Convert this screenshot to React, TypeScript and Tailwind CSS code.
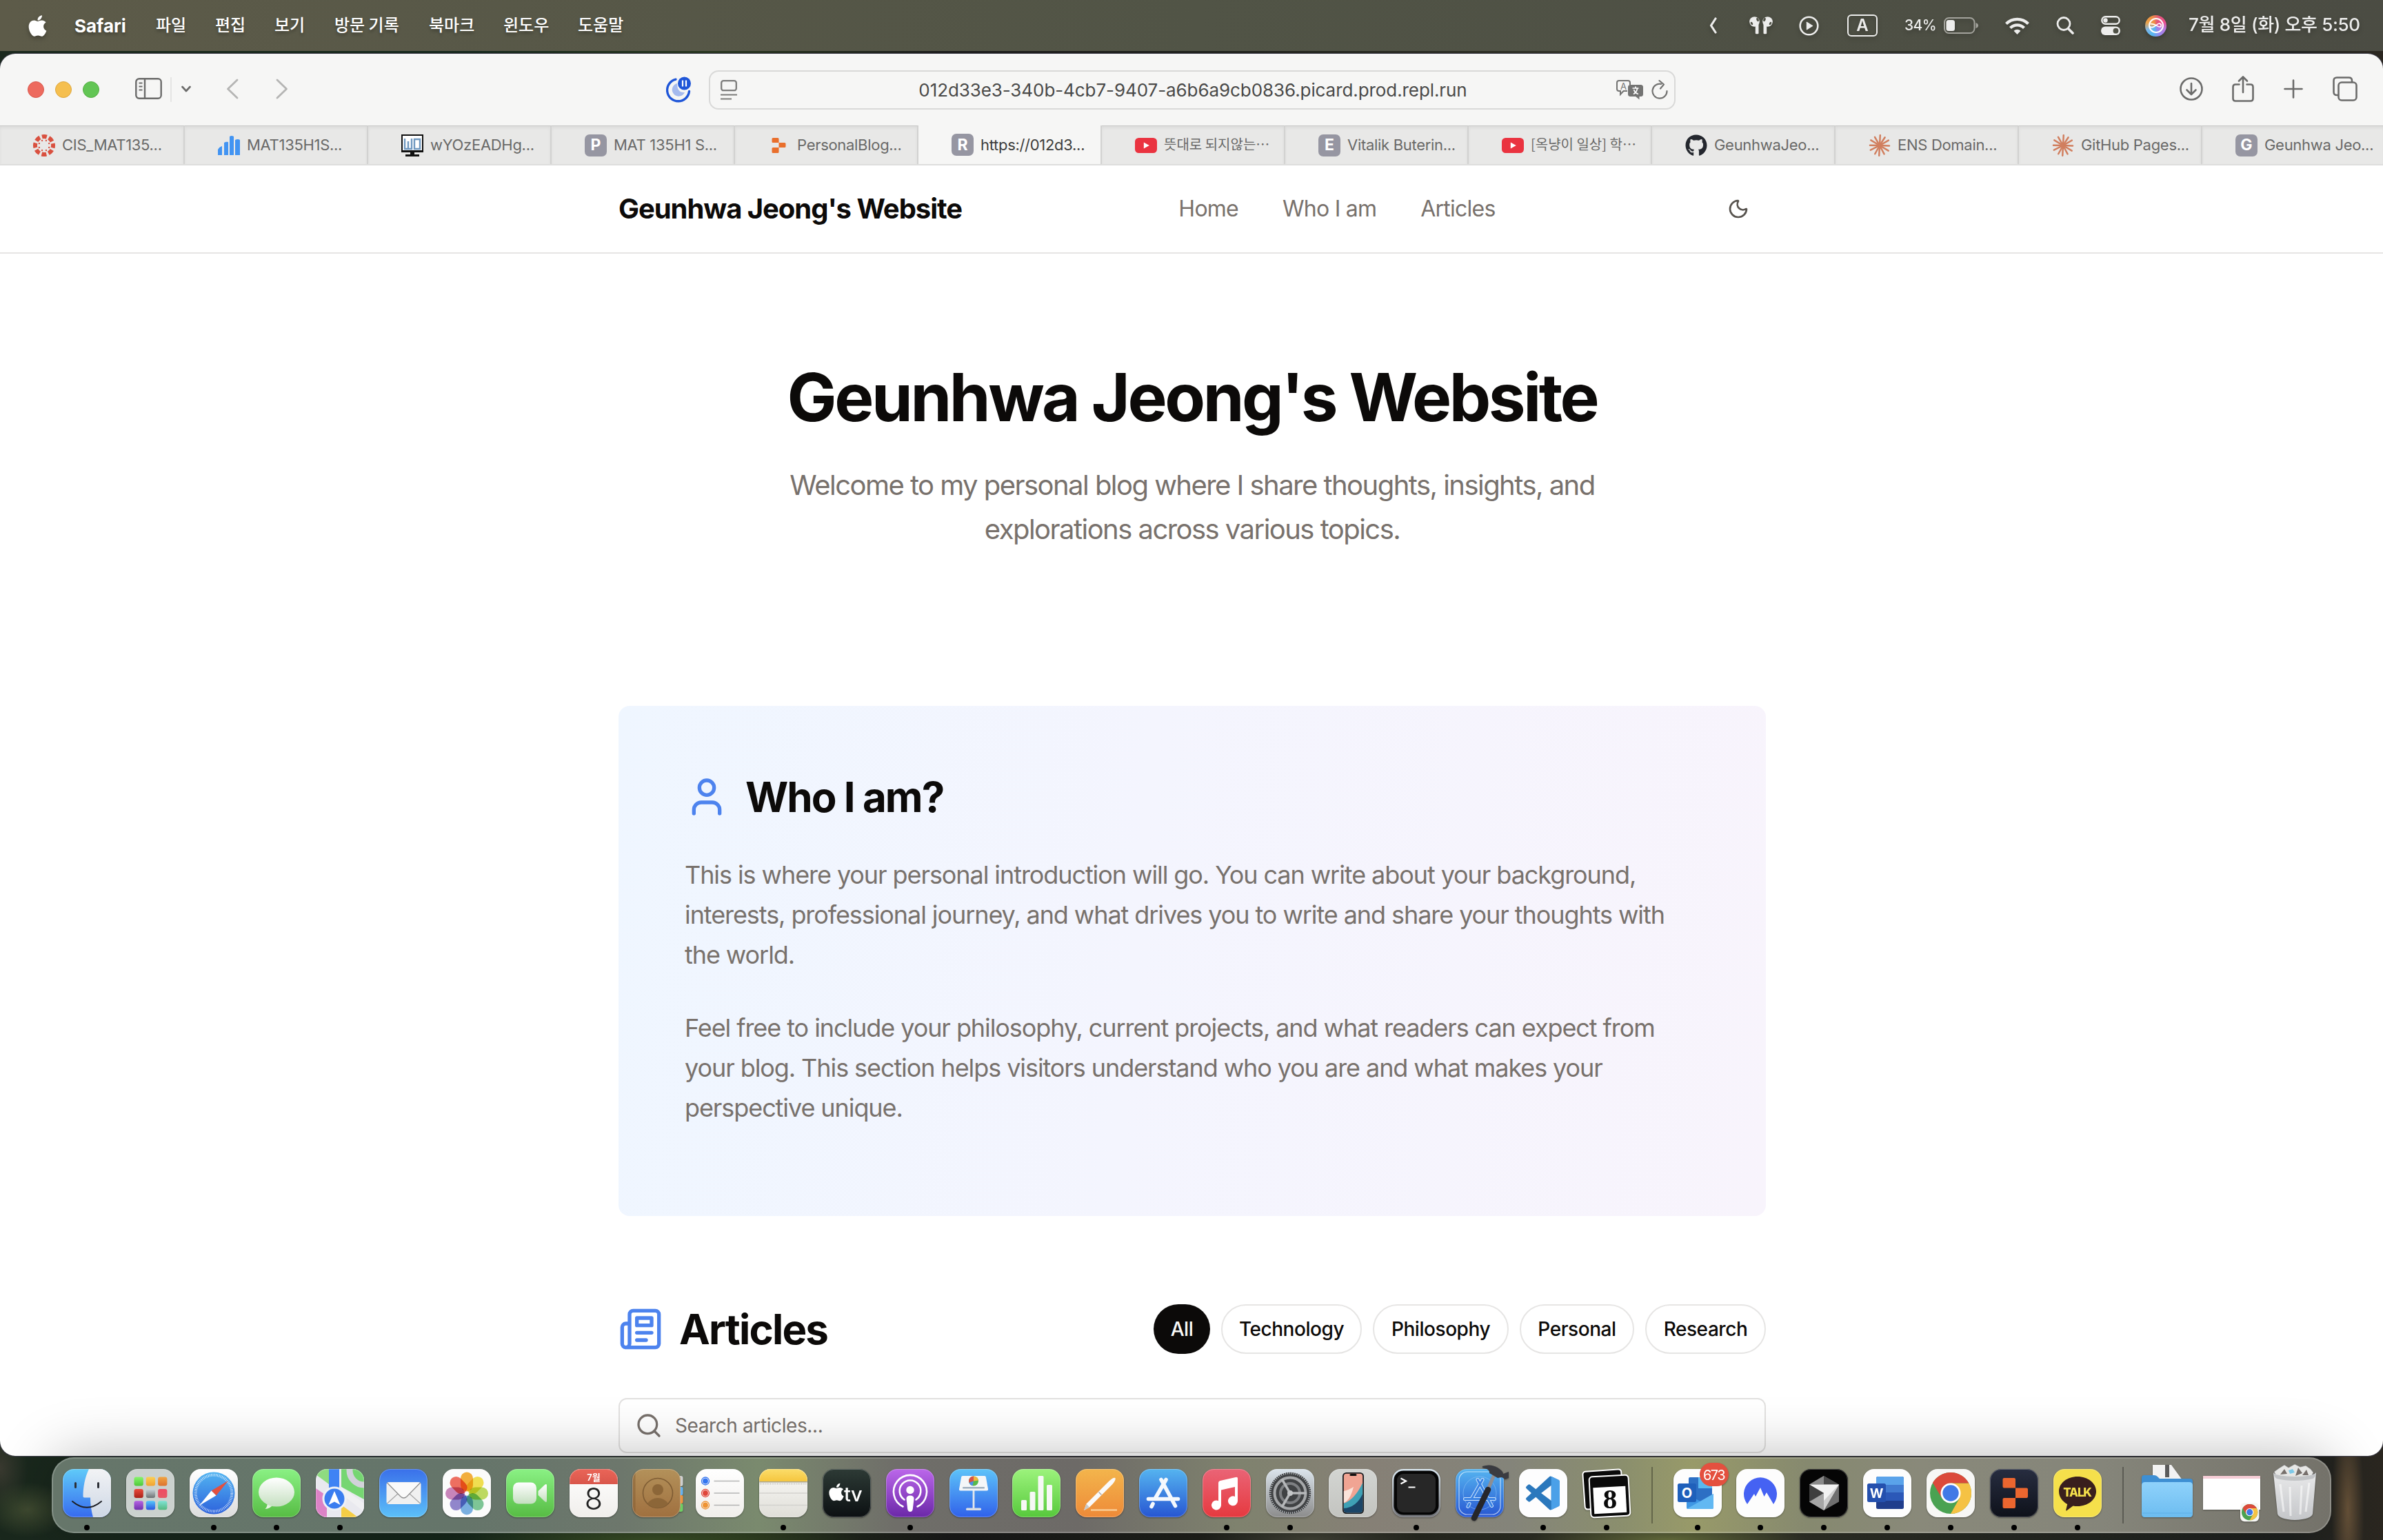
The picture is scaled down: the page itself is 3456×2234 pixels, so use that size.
import React from "react";
import { Search, User, Moon } from "lucide-react";
import { FaApple, FaGithub } from "react-icons/fa";

/* ---------- shared gradients ---------- */

const gradients: [string, string, string][] = [
  ["finderL", "#5fcaf9", "#376bee"],
  ["finderR", "#f2f3f5", "#cdd7e5"],
  ["white", "#ffffff", "#dcdcdc"],
  ["safari", "#52b4f1", "#2d62dc"],
  ["green", "#8af184", "#57bc44"],
  ["mail", "#3a70ea", "#5cc0f8"],
  ["calRed", "#ea6558", "#d9564b"],
  ["calBody", "#ffffff", "#f0eeeb"],
  ["contacts", "#b3915a", "#a0703f"],
  ["notesTop", "#fbdd6a", "#f5c63f"],
  ["notes", "#fbfaf7", "#dfded8"],
  ["tv", "#2d3a35", "#0c1012"],
  ["podcast", "#bb67ea", "#6b28a8"],
  ["keynote", "#5dc3f9", "#3061ea"],
  ["numbers", "#9cf37c", "#57c93c"],
  ["pages", "#f3b54c", "#ee8a38"],
  ["appstore", "#55b4f0", "#2756d2"],
  ["music", "#ea6476", "#e6393f"],
  ["settings", "#dbe4ec", "#8c8c8c"],
  ["phone", "#d3d5d2", "#c3c4c0"],
  ["terminal", "#d5e4ee", "#6e6f74"],
  ["replit", "#272d40", "#0e111a"],
  ["bubble", "#ffffff", "#c5dfc0"],
  ["folder", "#8fd2fb", "#6cbcf0"],
  ["trash", "#e9e9ea", "#c4c6c9"],
  ["lime", "#86f56a", "#4fc83c"],
  ["amber", "#fbcf52", "#f1a233"],
  ["orange", "#f1a441", "#dd7330"],
  ["red", "#ec4a3c", "#a82219"],
  ["gray", "#ccd6dc", "#6d7173"],
  ["pink", "#f04a62", "#e55a66"],
  ["purple", "#b562e2", "#7030ad"],
  ["cyan", "#54c6fb", "#2a55e0"],
  ["teal", "#7fe3d4", "#55b77f"],
];

function Gradients() {
  return (
    <svg className="absolute size-0">
      <defs>
        {gradients.map(([id, a, b]) => (
          <linearGradient key={id} id={id} x1="0" y1="0" x2="0" y2="1">
            <stop offset="0" stopColor={a} />
            <stop offset="1" stopColor={b} />
          </linearGradient>
        ))}
        <clipPath id="tile">
          <rect width="70" height="70" rx="16" />
        </clipPath>
      </defs>
    </svg>
  );
}

/* ---------- menu bar ---------- */

const menus = [
  { label: "파일", width: "w-[86px]" },
  { label: "편집", width: "w-[86px]" },
  { label: "보기", width: "w-[87px]" },
  { label: "방문 기록", width: "w-[137px]" },
  { label: "북마크", width: "w-[108px]" },
  { label: "윈도우", width: "w-[108px]" },
  { label: "도움말", width: "w-[108px]" },
];

function MenuBar() {
  return (
    <div className="flex h-[74px] shrink-0 items-center bg-linear-to-r from-[#5d5b49] via-[#515446] to-[#4b4c43] pr-[33px] pl-[41px] text-white">
      <FaApple className="h-[35px] w-[27px] drop-shadow-[0_3px_3px_rgba(0,0,0,0.3)]" />
      <span className="ml-10 w-[118px] text-[26px] font-bold [text-shadow:0_3px_4px_rgba(0,0,0,0.3)]">Safari</span>
      {menus.map((m) => (
        <span key={m.label} className={`${m.width} mb-1 font-['Noto_Sans_CJK_KR',sans-serif] text-[24px] font-medium whitespace-nowrap [text-shadow:0_3px_4px_rgba(0,0,0,0.3)]`}>
          {m.label}
        </span>
      ))}
      <div className="ml-auto flex items-center text-[#ededec] drop-shadow-[0_3px_3px_rgba(0,0,0,0.25)]">
        <svg className="h-[24px] w-[11px]" viewBox="0 0 11 24" fill="none" stroke="currentColor" strokeWidth="3.2" strokeLinecap="round" strokeLinejoin="round">
          <path d="M9 2 2.5 12 9 22" />
        </svg>
        <svg className="ml-[47px] h-[26px] w-[34px]" viewBox="0 0 34 26">
          <g fill="currentColor">
            <ellipse cx="7.5" cy="7.500" rx="7.300" ry="7.300" />
            <ellipse cx="26.500" cy="7.500" rx="7.300" ry="7.300" />
            <path d="M8.800 13 13.500 11V24q0 1.200-1.200 1.200H10q-1.200 0-1.200-1.200zM25.200 13 20.500 11V24q0 1.200 1.200 1.200H24q1.200 0 1.200-1.200z" />
          </g>
          <g fill="#4f5145">
            <ellipse cx="12" cy="4.500" rx="1.600" ry="2.800" transform="rotate(-25 12 4.500)" />
            <ellipse cx="22" cy="4.500" rx="1.600" ry="2.800" transform="rotate(25 22 4.500)" />
            <ellipse cx="3.500" cy="10" rx="1.500" ry="2.300" transform="rotate(-35 3.500 10)" />
            <ellipse cx="30.500" cy="10" rx="1.500" ry="2.300" transform="rotate(35 30.500 10)" />
          </g>
        </svg>
        <svg className="ml-[38px] size-[29px]" viewBox="0 0 29 29">
          <circle cx="14.500" cy="14.500" r="12.800" fill="none" stroke="currentColor" strokeWidth="2.600" />
          <path d="M10.800 9.200v10.600q0 .9.900.4l8.200-5.100q.8-.6 0-1.200l-8.200-5.100q-.9-.4-.9.400z" fill="currentColor" />
        </svg>
        <span className="ml-[41px] flex h-[32px] w-[44px] items-center justify-center rounded-[6px] border-2 border-current text-[24px] leading-none font-semibold">A</span>
        <span className="ml-[39px] w-[57px] text-[21px] font-medium tracking-[-0.6px]">34%</span>
        <svg className="h-[24px] w-[50px]" viewBox="0 0 50 24">
          <rect x="1" y="1" width="43.500" height="22" rx="6.500" fill="none" stroke="#a3a39c" strokeWidth="2" />
          <rect x="3.500" y="4" width="12.500" height="16" rx="3.500" fill="currentColor" />
          <path d="M46.500 8q3.500 1.200 3.500 4t-3.500 4z" fill="#a3a39c" />
        </svg>
        <svg className="ml-[39px] h-[25px] w-[35px]" viewBox="0 0 35 25" fill="none" stroke="currentColor" strokeWidth="4.200">
          <path d="M1.500 9.500a22.500 22.500 0 0 1 32 0" />
          <path d="M7.500 15.500a14 14 0 0 1 20 0" />
          <path d="M17.500 25l-5-5.200a7.200 7.200 0 0 1 10 0z" fill="currentColor" stroke="none" />
        </svg>
        <svg className="ml-[39px] h-[26px] w-[26px]" viewBox="0 0 26 26" fill="none" stroke="currentColor" strokeLinecap="round">
          <circle cx="11" cy="10.500" r="9" strokeWidth="2.800" />
          <path d="M17.500 17.500 24 24" strokeWidth="3.600" />
        </svg>
        <svg className="ml-[39px] h-[28px] w-[28px]" viewBox="0 0 28 28">
          <rect x="1.300" y="1.300" width="25.400" height="10.400" rx="5.200" fill="none" stroke="currentColor" strokeWidth="2.400" />
          <circle cx="6.500" cy="6.500" r="3.200" fill="currentColor" />
          <rect x="0" y="15.500" width="28" height="12.500" rx="6.200" fill="currentColor" />
          <circle cx="21.500" cy="21.700" r="3.900" fill="#4f5145" />
        </svg>
        <span className="ml-9 flex size-[31px] items-center justify-center rounded-full bg-[conic-gradient(from_20deg,#e2557a,#ee4f8c,#b77be0,#9a86ee,#55b8f2,#7bb6e8,#e9a24a,#ef9245,#e2557a)]">
          <svg className="size-[24px]" viewBox="0 0 24 24" fill="none" stroke="#fff" strokeWidth="2">
            <circle cx="12" cy="12" r="10" />
            <path d="M2.500 13.500C8 18 13 8.500 17 9q3.500 1.500 1.800 4.500C15.500 16.500 11 8 3.500 9.800" strokeWidth="1.700" />
          </svg>
        </span>
        <span className="mb-0.5 ml-8 w-[249px] font-[Inter,'Noto_Sans_CJK_KR',sans-serif] text-[26px] leading-[40px] font-medium tracking-[-0.34px] whitespace-nowrap">7월 8일 (화) 오후 5:50</span>
      </div>
    </div>
  );
}

/* ---------- Safari chrome ---------- */

function Toolbar() {
  return (
    <div className="flex h-[104px] shrink-0 items-center bg-[#f6f6f5] pr-[37px] pl-10 text-[#6b6b6a]">
      <div className="flex gap-4">
        <i className="size-6 rounded-full border border-[#d8584d] bg-[#ed6a5e]" />
        <i className="size-6 rounded-full border border-[#dea63c] bg-[#f5bf4f]" />
        <i className="size-6 rounded-full border border-[#55ae43] bg-[#62c554]" />
      </div>
      <svg className="mb-[3px] ml-[52px] h-[31px] w-[39px]" viewBox="0 0 39 31" fill="none" stroke="currentColor" strokeWidth="2.400">
        <rect x="1.300" y="1.300" width="36.400" height="28.400" rx="4.500" />
        <path d="M14 1v29" />
        <path d="M5.500 7.500h5M5.500 12.500h5M5.500 17.500h5" strokeWidth="2" />
      </svg>
      <i className="ml-3 h-9 w-0.5 bg-[#e5e5e4]" />
      <svg className="mb-[2px] ml-[14px] h-[10px] w-[14px]" viewBox="0 0 14 10" fill="none" stroke="currentColor" strokeWidth="2.600" strokeLinecap="round" strokeLinejoin="round">
        <path d="m1.500 2 5.500 6 5.500-6" />
      </svg>
      <svg className="mb-[2px] ml-[51px] h-[30px] w-[18px]" viewBox="0 0 18 30" fill="none" stroke="#b5b5b4" strokeWidth="2.800" strokeLinecap="round" strokeLinejoin="round">
        <path d="M16 2 2.500 15 16 28" />
      </svg>
      <svg className="mb-[2px] ml-[54px] h-[30px] w-[18px]" viewBox="0 0 18 30" fill="none" stroke="#b5b5b4" strokeWidth="2.800" strokeLinecap="round" strokeLinejoin="round">
        <path d="m2 2 13.500 13L2 28" />
      </svg>
      <svg className="ml-[547px] h-[38px] w-[38px]" viewBox="0 0 38 38">
        <path d="M15 4.200A16 16 0 1 0 34.500 21.500" fill="none" stroke="#1f56d8" strokeWidth="3.400" strokeLinecap="round" />
        <path d="M17 10a9.500 9.500 0 1 0 11 13Q17 24 17 10z" fill="#a5baee" />
        <circle cx="27.500" cy="10" r="9.500" fill="#1f56d8" />
        <path d="M25 5.500v9M30 5.500v9" stroke="#fff" strokeWidth="2.200" />
      </svg>
      <div className="ml-[25px] flex h-[57px] w-[1402px] items-center rounded-[14px] border-2 border-[#d9d9d8] pr-[9px] pl-[15px]">
        <div className="flex w-[76px]">
          <svg className="h-[29px] w-[24px]" viewBox="0 0 24 29" fill="none" stroke="#7c7c7b" strokeWidth="2.300">
            <rect x="1.200" y="1.200" width="21.600" height="14" rx="3" />
            <path d="M0 21.500h24M0 27.500h16" strokeWidth="2" />
          </svg>
        </div>
        <span className="flex-1 text-center text-[26px] tracking-[-0.08px] text-[#4a4a49]">012d33e3-340b-4cb7-9407-a6b6a9cb0836.picard.prod.repl.run</span>
        <div className="flex w-[80px] items-center justify-end gap-3 text-[#737372]">
          <svg className="h-[29px] w-[39px]" viewBox="0 0 39 29">
            <path d="M20 7V4q0-3-3-3H4Q1 1 1 4v9q0 3 3 3h2v5l4.500-5H16" fill="none" stroke="currentColor" strokeWidth="2" />
            <rect x="17" y="7" width="22" height="17" rx="3.500" fill="currentColor" />
            <path d="M27 23h6.500v5.500z" fill="currentColor" />
            <text x="6" y="13.500" fontSize="13" fill="currentColor">A</text>
            <path d="M23.500 12h9M28 9.500V12M25 20.500c3.500-2 5-5 5.500-8M25.500 14c1 3 3.500 5.500 6.500 6.500" stroke="#fff" strokeWidth="1.700" fill="none" />
          </svg>
          <svg className="h-[28px] w-[24px]" viewBox="0 0 24 28" fill="none" stroke="currentColor" strokeWidth="2.200" strokeLinecap="round" strokeLinejoin="round">
            <path d="M22.500 16A10.500 10.500 0 1 1 14 5.800" />
            <path d="m11.500 1 6.500 5.500-5 6" />
          </svg>
        </div>
      </div>
      <div className="mb-[2px] ml-auto flex items-center">
        <svg className="size-[34px]" viewBox="0 0 34 34" fill="none" stroke="currentColor" strokeWidth="2.600" strokeLinecap="round" strokeLinejoin="round">
          <circle cx="17" cy="17" r="15.500" />
          <path d="M17 9v15.500M10.500 18.500 17 25l6.500-6.500" />
        </svg>
        <svg className="ml-[42px] h-[38px] w-[32px]" viewBox="0 0 32 38" fill="none" stroke="currentColor" strokeWidth="2.600" strokeLinecap="round" strokeLinejoin="round">
          <path d="M10.500 12.500H5q-3.500 0-3.500 3.500v17q0 3.500 3.500 3.500h22q3.500 0 3.500-3.500V16q0-3.500-3.500-3.500h-5.500M16 24V2M10 7.500 16 1.500l6 6" />
        </svg>
        <svg className="ml-[43px] size-[28px]" viewBox="0 0 28 28" fill="none" stroke="currentColor" strokeWidth="2.600" strokeLinecap="round">
          <path d="M14 1.500v25M1.500 14h25" />
        </svg>
        <svg className="ml-[43px] h-[36px] w-[36px]" viewBox="0 0 36 36" fill="none" stroke="currentColor" strokeWidth="2.600">
          <path d="M8 27H6q-4.500 0-4.500-4.500V6Q1.500 1.500 6 1.500h17.500Q28 1.500 28 6v2" />
          <rect x="8.500" y="8.500" width="26" height="26" rx="4.500" />
        </svg>
      </div>
    </div>
  );
}

function LetterIcon({ letter }: { letter: string }) {
  return <span className="flex size-8 items-center justify-center rounded-[7px] bg-[#9696a2] text-[23px] font-bold text-white">{letter}</span>;
}

function CanvasIcon() {
  return (
    <svg className="size-8" viewBox="0 0 32 32">
      <circle cx="16" cy="16" r="13" fill="none" stroke="#d9503f" strokeWidth="6" strokeDasharray="7 3.210" strokeDashoffset="3.500" />
      {[0, 1, 2, 3, 4, 5, 6, 7].map((i) => (
        <circle key={i} cx="16" cy="8.300" r="1.200" fill="#d9503f" transform={`rotate(${i * 45 + 22.5} 16 16)`} />
      ))}
    </svg>
  );
}

function BarsIcon() {
  return (
    <svg className="size-8" viewBox="0 0 32 32" fill="#4294f2">
      <path d="M0 30v-8q2-4 6-5v13zM9 30V12q3-2 6-1v19zM17 30V3q3-2 6 0v27zM25 30V8q4-2 7 0v22z" />
    </svg>
  );
}

function MonitorIcon() {
  return (
    <svg className="size-8" viewBox="0 0 32 32">
      <path d="M0 0h32v26H19v3h7v3H6v-3h7v-3H0z" fill="#111" />
      <rect x="2" y="2" width="28" height="21" fill="#fff" />
      <path d="M5 6v15h10V6M10 10v11M19 7h8v14h-8z" fill="none" stroke="#6f98c0" strokeWidth="2.400" />
    </svg>
  );
}

function ReplitIcon() {
  return (
    <svg className="size-8" viewBox="0 0 32 32" fill="#e96f2c">
      <path d="M7 5h7q1.500 0 1.500 1.500V12H7q-1.500 0-1.500-1.500v-4Q5.500 5 7 5zM15.500 12H24q1.500 0 1.500 1.500v4Q25.500 19 24 19h-8.500zM7 19h8.500v6.500Q15.500 27 14 27H7q-1.500 0-1.500-1.500v-5Q5.500 19 7 19z" />
    </svg>
  );
}

function YoutubeIcon() {
  return (
    <svg className="size-8" viewBox="0 0 32 32">
      <rect y="5" width="32" height="22" rx="5.500" fill="#ea3340" />
      <path d="m12.800 11.500 8 4.500-8 4.500z" fill="#fff" />
    </svg>
  );
}

function ClaudeIcon() {
  return (
    <svg className="size-8" viewBox="0 0 32 32" stroke="#d17f5f" strokeWidth="2.500" strokeLinecap="round">
      {[3, 33, 60, 92, 121, 152, 183, 209, 243, 271, 301, 330].map((a, i) => (
        <path key={a} d={i % 2 ? "M16 16V2" : "M16 16V1.200"} transform={`rotate(${a} 16 16)`} />
      ))}
    </svg>
  );
}

const tabs: { icon: React.ReactNode; label: string; active?: boolean; korean?: boolean }[] = [
  { icon: <CanvasIcon />, label: "CIS_MAT135..." },
  { icon: <BarsIcon />, label: "MAT135H1S..." },
  { icon: <MonitorIcon />, label: "wYOzEADHg..." },
  { icon: <LetterIcon letter="P" />, label: "MAT 135H1 S..." },
  { icon: <ReplitIcon />, label: "PersonalBlog..." },
  { icon: <LetterIcon letter="R" />, label: "https://012d3...", active: true },
  { icon: <YoutubeIcon />, label: "뜻대로 되지않는…", korean: true },
  { icon: <LetterIcon letter="E" />, label: "Vitalik Buterin..." },
  { icon: <YoutubeIcon />, label: "[옥냥이 일상] 학…", korean: true },
  { icon: <FaGithub className="size-8 text-[#24272e]" />, label: "GeunhwaJeo..." },
  { icon: <ClaudeIcon />, label: "ENS Domain..." },
  { icon: <ClaudeIcon />, label: "GitHub Pages..." },
  { icon: <LetterIcon letter="G" />, label: "Geunhwa Jeo..." },
];

function TabBar() {
  return (
    <div className="flex h-[58px] shrink-0 overflow-hidden border-b-2 border-[#dededd]">
      {tabs.map((t) => (
        <div
          key={t.label}
          className={`flex w-[266px] shrink-0 items-center gap-2.5 border-r-2 border-[#d2d2d1] pl-12 first:w-[268px] last:w-[264px] last:border-r-0 ${t.active ? "bg-[#f6f6f5] text-[#3d3d3c]" : "border-t-[1.5px] border-t-[#c6c6c5] bg-[#e8e8e7] text-[#696968] shadow-[inset_0_3px_4px_rgba(0,0,0,0.05)]"}`}
        >
          <span className="flex size-8 shrink-0">{t.icon}</span>
          <span className={`whitespace-nowrap ${t.korean ? "mb-[3px] font-['Noto_Sans_CJK_KR',sans-serif] text-[20px]" : "text-[22px] tracking-[-0.3px]"}`}>{t.label}</span>
        </div>
      ))}
    </div>
  );
}

/* ---------- website ---------- */

const filters = [
  { label: "All", width: "w-[82px]" },
  { label: "Technology", width: "w-[204px]" },
  { label: "Philosophy", width: "w-[197px]" },
  { label: "Personal", width: "w-[166px]" },
  { label: "Research", width: "w-[175px]" },
];

function Website() {
  return (
    <div className="flex-1 overflow-hidden bg-white pl-0.5 text-[#0c0a09]">
      <header className="-ml-0.5 h-32 border-b-2 border-[#e6e5e4] pl-0.5">
        <div className="mx-auto flex h-full w-[1664px] items-center justify-between">
          <span className="w-[500px] text-[40px] font-bold tracking-[-1.05px] whitespace-nowrap">Geunhwa Jeong's Website</span>
          <nav className="flex gap-[64px] text-[32px] tracking-[-0.75px] text-[#78716c]">
            <a>Home</a>
            <a>Who I am</a>
            <a>Articles</a>
          </nav>
          <span className="flex w-20 justify-center">
            <Moon className="size-8 text-[#57534e]" strokeWidth={2} />
          </span>
        </div>
      </header>

      <main className="mx-auto w-[1664px]">
        <section className="py-40 text-center">
          <h1 className="text-[96px] leading-none font-bold tracking-[-3.4px]">Geunhwa Jeong's Website</h1>
          <p className="mt-12 text-[40px] leading-[64px] tracking-[-1.54px] text-[#78716c]">
            Welcome to my personal blog where I share thoughts, insights, and
            <br />
            explorations across various topics.
          </p>
        </section>

        <section className="mt-16 h-[740px] rounded-2xl bg-linear-[95deg,#eff6ff,#f4f5fe_45%,#f8f4fc] p-24">
          <div className="flex h-[72px] items-center gap-6">
            <User className="size-16 text-[#4d83ee]" />
            <h2 className="text-[60px] leading-[72px] font-bold tracking-[-1.95px]">Who I am?</h2>
          </div>
          <div className="mt-12 space-y-12 text-[36px] leading-[58px] tracking-[-1.08px] whitespace-nowrap text-[#78716c]">
            <p>
              This is where your personal introduction will go. You can write about your background,
              <br />
              interests, professional journey, and what drives you to write and share your thoughts with
              <br />
              the world.
            </p>
            <p>
              Feel free to include your philosophy, current projects, and what readers can expect from
              <br />
              your blog. This section helps visitors understand who you are and what makes your
              <br />
              perspective unique.
            </p>
          </div>
        </section>

        <section className="mt-32">
          <div className="flex h-[72px] items-center justify-between">
            <div className="flex items-center gap-6">
              <svg className="size-16 text-[#4d83ee]" viewBox="0 0 24 24" fill="none" stroke="currentColor" strokeWidth="2" strokeLinecap="round" strokeLinejoin="round">
                <path d="M4 22h16a2 2 0 0 0 2-2V4a2 2 0 0 0-2-2H8a2 2 0 0 0-2 2v16a2 2 0 0 1-2 2Zm0 0a2 2 0 0 1-2-2v-9c0-1.100.9-2 2-2h2" />
                <path d="M18 14h-8M15 18h-5M10 6h8v4h-8V6Z" />
              </svg>
              <h2 className="text-[60px] leading-[72px] font-bold tracking-[-1.8px]">Articles</h2>
            </div>
            <div className="flex gap-4">
              {filters.map((f, i) => (
                <span
                  key={f.label}
                  className={`flex h-[72px] items-center justify-center rounded-full text-[28px] font-medium tracking-[-0.45px] ${f.width} ${i === 0 ? "bg-[#0c0a09] text-[#fafaf9]" : "border-2 border-[#e6e5e4]"}`}
                >
                  {f.label}
                </span>
              ))}
            </div>
          </div>
          <div className="mt-16 flex h-20 items-center gap-[18px] rounded-xl border-2 border-[#e2e1e0] px-[22px]">
            <Search className="size-10 text-[#78716c]" />
            <span className="text-[28px] tracking-[-0.4px] text-[#78716c]">Search articles...</span>
          </div>
        </section>
      </main>
    </div>
  );
}

/* ---------- dock icons (70 x 70 artboard) ---------- */

function Tile({ fill, children }: { fill: string; children?: React.ReactNode }) {
  return (
    <>
      <g clipPath="url(#tile)">
        <rect width="70" height="70" fill={fill} />
        {children}
      </g>
      <rect x=".5" y=".5" width="69" height="69" rx="15.500" fill="none" stroke="#fff" strokeOpacity=".25" />
    </>
  );
}

function ChromeMark() {
  return (
    <>
      <circle cx="35" cy="35" r="30" fill="#4aa252" />
      <path d="M35 20.500h26.300A30 30 0 0 1 35 65L48 42z" fill="#f5c244" />
      <path d="M9 20A30 30 0 0 1 61.300 20.500H35L22 42z" fill="#db4a3b" />
      <circle cx="35" cy="35" r="14.500" fill="#fff" />
      <circle cx="35" cy="35" r="11.700" fill="#4079e6" />
    </>
  );
}

const petals = ["#f5a623", "#f3de3a", "#b7d84b", "#6ec08a", "#6aa7e0", "#8478c8", "#c476b4", "#ef5d4c"];

const dockIcons: Record<string, React.ReactNode> = {
  finder: (
    <Tile fill="url(#finderL)">
      <path d="M38 0C32 12 29.500 27 29.500 39.500q0 2 1.800 2H40c0 10 1.500 20 4 28.500h26V0z" fill="url(#finderR)" />
      <path d="M18.500 20.500v6M51.500 20.500v6" stroke="#2c2f36" strokeWidth="3" strokeLinecap="round" />
      <path d="M14 47q21 17.500 42 0" fill="none" stroke="#1d1f25" strokeWidth="2" strokeLinecap="round" />
    </Tile>
  ),
  launchpad: (
    <Tile fill="#cbd1ce">
      {["lime", "amber", "orange", "red", "gray", "pink", "purple", "cyan", "teal"].map((g, i) => (
        <rect key={g} x={11.5 + (i % 3) * 17.3} y={11.5 + Math.floor(i / 3) * 17.4} width="13.300" height="13" rx="3" fill={`url(#${g})`} />
      ))}
    </Tile>
  ),
  safari: (
    <Tile fill="url(#white)">
      <circle cx="35" cy="35" r="30.500" fill="url(#safari)" />
      <circle cx="35" cy="35" r="26.300" fill="none" stroke="#fff" strokeOpacity=".85" strokeWidth="4" strokeDasharray=".8 1.495" />
      <path d="M56 17 38.500 38.500 31.500 31.500z" fill="#e3503f" />
      <path d="M14 53 31.500 31.500l7 7z" fill="#fff" />
    </Tile>
  ),
  messages: (
    <Tile fill="url(#green)">
      <path d="M22 48q0 7-3.500 10 7-.5 12-6.500z" fill="#e4f3e0" />
      <ellipse cx="35" cy="33.500" rx="26" ry="21" fill="url(#bubble)" />
    </Tile>
  ),
  maps: (
    <Tile fill="#e9e9ef">
      <path d="M0 0h19v22L0 8z" fill="#8edc80" />
      <path d="M37 0h33v44L37 26z" fill="#76d672" />
      <circle cx="70" cy="2" r="21" fill="none" stroke="#d2d2da" strokeWidth="9" />
      <path d="M0 28l16 11v31H0z" fill="#dc82c6" />
      <path d="M37 52l24 18H37z" fill="#f5cd45" />
      <path d="M19 0h15v28H19z" fill="#3f83f4" />
      <path d="M37 36l33 26V50L37 26z" fill="#f0f0f3" />
      <circle cx="27" cy="43" r="17.500" fill="#eef1f6" />
      <circle cx="27" cy="43" r="14.500" fill="#3a7df0" />
      <path d="M27 32 35.500 52 27 47.500 18.500 52z" fill="#fff" />
    </Tile>
  ),
  mail: (
    <Tile fill="url(#mail)">
      <rect x="10.500" y="19" width="50" height="32" rx="3.500" fill="#f0f0f0" />
      <path d="M11.500 50 28 35M59.500 50 43 35" stroke="#a5a5a5" strokeWidth="1.200" />
      <path d="M11.500 20 31 40q4.500 4 9 0L59.500 20" fill="#fafafa" stroke="#8f8f8f" strokeWidth="1.300" />
    </Tile>
  ),
  photos: (
    <Tile fill="#fbfbfb">
      {petals.map((c, i) => (
        <rect key={c} x="26" y="4.500" width="18" height="28" rx="9" fill={c} fillOpacity=".88" className="mix-blend-multiply" transform={`rotate(${i * 45} 35 35.500)`} />
      ))}
    </Tile>
  ),
  facetime: (
    <Tile fill="url(#green)">
      <rect x="10" y="19.500" width="34" height="31" rx="8" fill="url(#bubble)" />
      <path d="M46.500 32 56 23q3-2.500 3 1v22q0 3.500-3 1l-9.500-9z" fill="url(#bubble)" />
    </Tile>
  ),
  calendar: (
    <Tile fill="url(#calBody)">
      <rect width="70" height="22" fill="url(#calRed)" />
      <text x="35" y="16.500" textAnchor="middle" fontSize="13" fontWeight="600" fill="#fff" fontFamily="Inter, 'Noto Sans CJK KR', sans-serif">7월</text>
      <text x="35" y="59" textAnchor="middle" fontSize="43" fontWeight="300" fill="#222" fontFamily="Inter, sans-serif">8</text>
    </Tile>
  ),
  contacts: (
    <>
      <rect x="60" y="10" width="13.500" height="15" rx="3" fill="#cfcfcf" />
      <rect x="60" y="26" width="13.500" height="12" rx="2" fill="#67b2ef" />
      <rect x="60" y="38" width="13.500" height="12" rx="2" fill="#ee9440" />
      <rect x="60" y="50" width="13.500" height="12" rx="3" fill="#6fcf64" />
      <Tile fill="url(#contacts)">
        <rect width="4.500" height="70" fill="#7f5a30" fillOpacity=".5" />
        <circle cx="37" cy="35" r="21.500" fill="none" stroke="#7d5b33" strokeWidth="1.600" />
        <circle cx="37" cy="30" r="8" fill="#8c6638" />
        <path d="M22 50q6-8 15-8t15 8q-6 6.500-15 6.500T22 50z" fill="#8c6638" />
      </Tile>
    </>
  ),
  reminders: (
    <Tile fill="url(#calBody)">
      {["#3475f0", "#e0463a", "#ee9434"].map((c, i) => (
        <g key={c}>
          <circle cx="14" cy={17.5 + i * 17.5} r="5.500" fill="none" stroke={c} strokeWidth="1.300" />
          <circle cx="14" cy={17.5 + i * 17.5} r="3.900" fill={c} />
          <path d={i === 0 ? "M26.500 17.500h37" : i === 1 ? "M26.500 35h37" : "M26.500 52.500h37"} stroke="#b4b4b4" strokeWidth="1.400" />
        </g>
      ))}
    </Tile>
  ),
  notes: (
    <Tile fill="url(#notes)">
      <rect width="70" height="18" fill="url(#notesTop)" />
      <rect y="18" width="70" height="1.500" fill="#a9a48f" />
      <path d="M1 21.500h68" stroke="#bdbbb4" strokeWidth="2" strokeDasharray="1 1.500" />
      <path d="M0 35h70M0 52.500h70" stroke="#d3d2ce" strokeWidth="1.500" />
    </Tile>
  ),
  tv: (
    <Tile fill="url(#tv)">
      <FaApple x="5.500" y="19" size={29} color="#fff" />
      <text x="31" y="46.500" fontSize="29" fontWeight="500" letterSpacing="-.5" fill="#fff" fontFamily="Inter, sans-serif">tv</text>
    </Tile>
  ),
  podcasts: (
    <Tile fill="url(#podcast)">
      <g fill="none" stroke="#fff" strokeWidth="2.600" strokeLinecap="round">
        <path d="M24.500 54.500a24 24 0 1 1 21 0" />
        <path d="M26.500 44.500a15.300 15.300 0 1 1 17 0" />
      </g>
      <circle cx="35" cy="30.500" r="5.700" fill="#fff" />
      <path d="M29.500 43q0-4.500 5.500-4.500t5.500 4.500l-1.700 15q-.6 4-3.800 4t-3.800-4z" fill="#fff" />
    </Tile>
  ),
  keynote: (
    <Tile fill="url(#keynote)">
      <path d="M33.600 30h2.800v28h-2.800z" fill="#e4e8ec" />
      <rect x="24" y="56.500" width="22" height="3.500" rx="1.500" fill="#d8dde4" />
      <path d="M19 10h32q1.500 0 1.800 1.500L56 29q.3 2.500-2 2.500H16q-2.300 0-2-2.500l3.200-17.500Q17.500 10 19 10z" fill="#f4f6f8" />
      <rect x="19" y="26" width="32" height="2.500" rx="1" fill="#9fb0bf" />
      <circle cx="35" cy="17.500" r="7" fill="#57b94c" />
      <path d="M35 17.500V10.500a7 7 0 0 0-6.500 9.500z" fill="#d9534a" />
      <path d="M35 17.500V10.500a7 7 0 0 1 6.900 6z" fill="#f2b53c" />
      <path d="M35 17.500l-6.500 2.500a7 7 0 0 0 5 4.300z" fill="#4d8de8" />
    </Tile>
  ),
  numbers: (
    <Tile fill="url(#numbers)">
      <g fill="#f6f8f5">
        <rect x="13" y="45" width="8" height="15" rx="1.500" />
        <rect x="25.500" y="33" width="8" height="27" rx="1.500" />
        <rect x="37.500" y="10" width="8" height="50" rx="1.500" />
        <rect x="50" y="23" width="8" height="37" rx="1.500" />
      </g>
    </Tile>
  ),
  pages: (
    <Tile fill="url(#pages)">
      <path d="M22 59.500h38" stroke="#fbd9a8" strokeWidth="2" />
      <path d="M12 60l3.500-9.500L49 17q6-5.500 8.500-4 1 3-4 9L20 55.500z" fill="#fafafa" />
      <path d="M12 60l3.500-9.500 4.500 5z" fill="#c9c9c9" />
      <path d="M33.500 33.500l4 4" stroke="#a9a9a9" strokeWidth="1.500" />
    </Tile>
  ),
  appstore: (
    <Tile fill="url(#appstore)">
      <g stroke="#f5f9fd" strokeWidth="5.600" strokeLinecap="round">
        <path d="M39 15.500 23.500 42.500M32 15.500 52.500 53.500M13.500 43.500h43M20 50.500l-2 4" />
      </g>
    </Tile>
  ),
  music: (
    <Tile fill="url(#music)">
      <path d="M51 13.500v33a7 7 0 1 1-4-6.500V26l-20 4.500v22a7 7 0 1 1-4-6.300V20.500q0-2.800 2.700-3.400L48 12q3-.6 3 1.500z" fill="#fff" />
    </Tile>
  ),
  settings: (
    <Tile fill="url(#settings)">
      <circle cx="35" cy="35" r="30" fill="#a9adb0" />
      <circle cx="35" cy="35" r="27.500" fill="#404244" />
      <circle cx="35" cy="35" r="28.500" fill="none" stroke="#35373a" strokeWidth="3.500" strokeDasharray="1.500 1.485" />
      <circle cx="35" cy="35" r="22.500" fill="none" stroke="#a5a7a9" strokeWidth="4" />
      <circle cx="35" cy="35" r="14" fill="none" stroke="#7d7f82" strokeWidth="4" />
      <path d="M35 35h24M35 35 23 14.500M35 35 23 55.500" stroke="#b5b7b9" strokeWidth="3.500" />
      <circle cx="35" cy="35" r="4" fill="#c4c6c8" />
    </Tile>
  ),
  iphone: (
    <Tile fill="url(#phone)">
      <rect x="20" y="5" width="31" height="60" rx="5.500" fill="#1b1c1f" />
      <rect x="21.800" y="6.800" width="27.400" height="56.400" rx="4" fill="#f0a493" />
      <path d="M49.200 20v39q0 4.200-4 4.200H26q-4.200 0-4.200-4.200V50Q38 44 49.200 20z" fill="#3fa1b5" />
      <path d="M49.200 36v23q0 4.200-4 4.200H26q-4.200 0-4.200-4.200V57Q40 56 49.200 36z" fill="#1c4668" />
      <path d="M21.800 49Q31 46 36 26q-8 5-14.200 6z" fill="#fbe3da" />
      <rect x="30.500" y="7" width="10" height="3" rx="1.500" fill="#111" />
    </Tile>
  ),
  terminal: (
    <Tile fill="url(#terminal)">
      <rect x="2.500" y="2.500" width="65" height="64" rx="13.500" fill="#050505" />
      <rect x="7" y="7" width="56" height="56" rx="9" fill="#272727" />
      <path d="M12.500 13.500 20 17.500l-7.500 4" fill="none" stroke="#fff" strokeWidth="2.200" />
      <path d="M23.500 26.500h10" stroke="#fff" strokeWidth="2.200" />
    </Tile>
  ),
  xcode: (
    <>
      <Tile fill="url(#appstore)">
        <rect x="5" y="4" width="60" height="62" rx="12" fill="none" stroke="#fff" strokeOpacity=".65" strokeWidth="1.200" />
        <circle cx="35" cy="35" r="24" fill="none" stroke="#8fc4f6" strokeOpacity=".6" />
        <g stroke="#cfe5fb" strokeWidth="5" strokeLinecap="round">
          <path d="M39 15.500 23.500 42.500M32 15.500 52.500 53.500M13.500 43.500h43M20 50.500l-2 4" />
        </g>
        <g stroke="#3a83e4" strokeWidth="3" strokeLinecap="round">
          <path d="M39 15.500 23.500 42.500M32 15.500 52.500 53.500M13.500 43.500h43M20 50.500l-2 4" />
        </g>
      </Tile>
      <path d="M57 6 46 32" stroke="#8e8e92" strokeWidth="5" />
      <path d="M47 30 27 71" stroke="#26262a" strokeWidth="8.500" strokeLinecap="round" />
      <path d="M39-4q12-4 22 2 8 5 8 9l8-3v9l-5 2-5-3-6 1-12-7q1-6-10-8z" fill="#3a3b40" />
    </>
  ),
  vscode: (
    <Tile fill="#fdfdfe">
      <g transform="translate(10 10.500) scale(2.040)">
        <path
          fill="#2b78bd"
          d="M23.150 2.587L18.210.21a1.494 1.494 0 0 0-1.705.29l-9.460 8.630-4.120-3.128a.999.999 0 0 0-1.276.057L.327 7.261A1 1 0 0 0 .326 8.740L3.899 12 .326 15.260a1 1 0 0 0 .001 1.479L1.650 17.940a.999.999 0 0 0 1.276.057l4.120-3.128 9.460 8.630a1.492 1.492 0 0 0 1.704.29l4.942-2.377A1.500 1.500 0 0 0 24 20.060V3.939a1.500 1.500 0 0 0-.85-1.352zm-5.146 14.861L10.826 12l7.178-5.448v10.896z"
        />
        <path fill="#4ba0e8" d="M18 .1l5.200 2.500q.8.500.8 1.400v16q0 .9-.8 1.400L18 23.900z" />
      </g>
    </Tile>
  ),
  notioncal: (
    <>
      <g transform="rotate(-4 30 30)">
        <rect x="1" y="1" width="58" height="57" rx="5" fill="#fff" />
        <rect x="3" y="3" width="54" height="53" rx="3.500" fill="#0a0a0a" />
      </g>
      <g transform="rotate(-3 40 40)">
        <rect x="10" y="9" width="59" height="61" rx="5.500" fill="#fff" />
        <rect x="12" y="11" width="55" height="57" rx="4" fill="#0a0a0a" />
        <path d="M16 26h47v38H16z" fill="#fff" />
      </g>
      <text x="40" y="57" textAnchor="middle" fontSize="41" fontWeight="bold" fill="#0a0a0a" fontFamily="'Liberation Serif', serif">8</text>
    </>
  ),
  outlook: (
    <>
      <Tile fill="#fdfdfd">
        <rect x="22" y="12" width="34" height="40" rx="2" fill="#2d6fc4" />
        <path d="M36 12h20v16H36z" fill="#5ab8f0" />
        <path d="M19 36l20 11 19-11v20q0 2-2 2H21q-2 0-2-2z" fill="#3f97e4" />
        <path d="M19 58l39-22v20q0 2-2 2z" fill="#62b8f2" />
        <rect x="6" y="21" width="27" height="27" rx="2.500" fill="#1f60bb" />
        <text x="19.500" y="42" textAnchor="middle" fontSize="20" fontWeight="bold" fill="#fff" fontFamily="Inter, sans-serif">O</text>
      </Tile>
      <rect x="38" y="-9" width="42" height="34" rx="17" fill="#e4503f" />
      <text x="58.500" y="15.500" textAnchor="middle" fontSize="20" fill="#fff" letterSpacing="-1.500" fontFamily="Inter, sans-serif">673</text>
    </>
  ),
  nord: (
    <Tile fill="#fdfdfd">
      <path d="M16 51A24 24 0 1 1 54 51L44 34l-3.500 6L35 27l-7 13-2-4z" fill="#4562f3" />
    </Tile>
  ),
  cursor: (
    <Tile fill="#050505">
      <path d="M35 10 57 22.500v25L35 60 14 47.500v-25z" fill="#6f6f6f" />
      <path d="M35 10 57 22.500H14z" fill="#4a4a4a" />
      <path d="M35 10v12.500H14z" fill="#8a8a8a" />
      <path d="M14 22.500h43L35 60V35z" fill="#f2f2f2" />
      <path d="M57 22.500 35 60V46z" fill="#cfcfcf" />
      <path d="M14 22.500 35 35v10L14 47.500z" fill="#3e3e3e" />
      <path d="M14 47.500 35 35v25z" fill="#a5a5a5" />
    </Tile>
  ),
  word: (
    <Tile fill="#fdfdfd">
      <rect x="19" y="11" width="40" height="47" rx="2.500" fill="#1f3d8c" />
      <path d="M19 13.500q0-2.500 2.500-2.500h35q2.500 0 2.500 2.500V23H19z" fill="#5aa3ea" />
      <path d="M19 23h40v11.500H19z" fill="#417ad0" />
      <path d="M19 34.500h40V46H19z" fill="#2b58b8" />
      <rect x="6" y="21" width="27" height="27" rx="2.500" fill="#2450ae" />
      <text x="19.500" y="41.500" textAnchor="middle" fontSize="19" fontWeight="bold" fill="#fff" fontFamily="Inter, sans-serif">W</text>
    </Tile>
  ),
  chrome: (
    <Tile fill="#f7f7f5">
      <ChromeMark />
    </Tile>
  ),
  replit: (
    <Tile fill="url(#replit)">
      <path d="M20.500 13H35q2 0 2 2v12.500H20.500q-2 0-2-2V15q0-2 2-2zM37 27.500h16q2 0 2 2V40q0 2-2 2H37zM20.500 42H37v13q0 2-2 2H20.500q-2 0-2-2V44q0-2 2-2z" fill="#ec662f" />
    </Tile>
  ),
  talk: (
    <Tile fill="#f5e04b">
      <path d="M35 11c15 0 27 9.500 27 21.500S50 54 35 54q-3.500 0-6.500-.6L19 60.500q-1 0-.8-1l2-8.500C13 47 8 40.500 8 32.500 8 20.500 20 11 35 11z" fill="#391f1d" />
      <text x="34.500" y="39.500" textAnchor="middle" fontSize="17" fontWeight="800" letterSpacing="-1.200" fill="#f5e04b" fontFamily="Inter, sans-serif">TALK</text>
    </Tile>
  ),
  folder: (
    <>
      <path d="M13 22V-6h27l16 22v8z" fill="#f2f2f2" />
      <path d="M31-6h6v18h-6z" fill="#5b5b5b" />
      <path d="M-3 65V13q0-4 4-4h14q3 0 5 2l3 3h44q4 0 4 4v47q0 5-5 5H2q-5 0-5-5z" fill="#3e8fd3" />
      <path d="M-3 24q0-5 5-5h64q5 0 5 5v41q0 5-5 5H2q-5 0-5-5z" fill="url(#folder)" />
      <path d="M-2 64h72" stroke="#5caee6" strokeWidth="1" />
    </>
  ),
  window: (
    <>
      <rect x="-6" y="10" width="83" height="49" fill="#fff" />
      <rect x="-6" y="10" width="83" height="4" fill="#f6cdd6" />
      <g transform="translate(48 49) scale(.39)">
        <rect width="70" height="70" rx="16" fill="#f7f7f5" />
        <ChromeMark />
      </g>
    </>
  ),
  trash: (
    <>
      <path d="M5 4 12-1l8-5 6 4 9-5 8 4 8-2 7 5 4 5-4 8H10z" fill="#e7e7e5" stroke="#8b8b8b" strokeWidth=".8" />
      <path d="M14 8l6-8 4 7zM36 10l4-12 6 8zM46 9l6-8 3 8z" fill="#77706c" />
      <path d="M26 2l6-2 3 5-7 2z" fill="#7ec9e8" />
      <path d="M4 5q1 5 31 6 29-1 31-6l-5 60q-2 8-26 9-23-1-25-9z" fill="url(#trash)" />
      <path d="M4 5q2 5.500 31 6 28-.5 31-6-1 8-5 9-12 3-26 3T9 14Q5 12 4 5z" fill="#b9bbbe" fillOpacity=".8" />
      <path d="M14 22l5 40M28 26l1 42M45 24l-2 42M56 20l-5 42" stroke="#fff" strokeOpacity=".55" strokeWidth="3" fill="none" />
    </>
  ),
};

const dockGroups: { name: string; running?: boolean }[][] = [
  [
    { name: "finder", running: true },
    { name: "launchpad" },
    { name: "safari", running: true },
    { name: "messages", running: true },
    { name: "maps", running: true },
    { name: "mail" },
    { name: "photos" },
    { name: "facetime" },
    { name: "calendar" },
    { name: "contacts" },
    { name: "reminders" },
    { name: "notes", running: true },
    { name: "tv" },
    { name: "podcasts", running: true },
    { name: "keynote" },
    { name: "numbers" },
    { name: "pages" },
    { name: "appstore" },
    { name: "music", running: true },
    { name: "settings", running: true },
    { name: "iphone" },
    { name: "terminal", running: true },
    { name: "xcode" },
    { name: "vscode", running: true },
    { name: "notioncal", running: true },
  ],
  [
    { name: "outlook", running: true },
    { name: "nord", running: true },
    { name: "cursor", running: true },
    { name: "word", running: true },
    { name: "chrome", running: true },
    { name: "replit", running: true },
    { name: "talk", running: true },
  ],
  [{ name: "folder" }, { name: "window" }, { name: "trash" }],
];

function Dock() {
  return (
    <div className="relative z-10 mx-auto mt-0.5 flex h-[110px] w-[3306px] shrink-0 justify-center rounded-[32px] border-2 border-white/20 bg-[linear-gradient(90deg,#66766a,#65756a_18%,#6d776c_25%,#7a8a6e_31%,#6f6e69_37%,#6d6a67_45%,#7f826e_52%,#868076_58%,#84847a_64%,#8b8f6d_69%,#989a69_72%,#86896f_77%,#89897a_82%,#85857a_90%,#74726a)] bg-origin-border pr-0.5 shadow-[0_0_84px_rgba(0,0,0,0.28)]">
      {dockGroups.map((group, g) => (
        <React.Fragment key={g}>
          {g > 0 && (
            <span className="mt-3 flex h-[82px] w-10 justify-center">
              <i className="w-0.5 bg-black/30" />
            </span>
          )}
          {group.map((app) => (
            <span key={app.name} className="flex w-[91.83px] flex-col items-center pt-[15px]">
              <svg className="size-[70px] overflow-visible drop-shadow-[0_1px_1px_rgba(0,0,0,0.35)]" viewBox="0 0 70 70">
                {dockIcons[app.name]}
              </svg>
              {app.running && <i className="mt-[11px] size-2 rounded-full bg-black" />}
            </span>
          ))}
        </React.Fragment>
      ))}
    </div>
  );
}

export default function App() {
  return (
    <div className="relative flex h-[2234px] w-[3456px] flex-col overflow-hidden bg-[radial-gradient(60px_40px_at_40px_2190px,#3f4a30,transparent),radial-gradient(40px_60px_at_0px_2130px,#3a3a30,transparent),radial-gradient(300px_30px_at_950px_2234px,#3c5228,transparent),radial-gradient(200px_30px_at_2420px_2234px,#6b7440,transparent),radial-gradient(160px_30px_at_1900px_2234px,#45463a,transparent),radial-gradient(24px_140px_at_3405px_2190px,#6a543a,transparent),linear-gradient(90deg,#1a281d,#16281c_20%,#28361f_30%,#1b1b1b_40%,#20221c_52%,#35362a_70%,#272a24_85%,#1f2220_96%,#2b2720)] font-[Inter,sans-serif]">
      <Gradients />
      <MenuBar />
      <div className="mt-1 flex h-[2034px] shrink-0 flex-col overflow-hidden rounded-[22px] shadow-[0_0_0_1px_#3c3b48]">
        <Toolbar />
        <TabBar />
        <Website />
      </div>
      <Dock />
    </div>
  );
}
